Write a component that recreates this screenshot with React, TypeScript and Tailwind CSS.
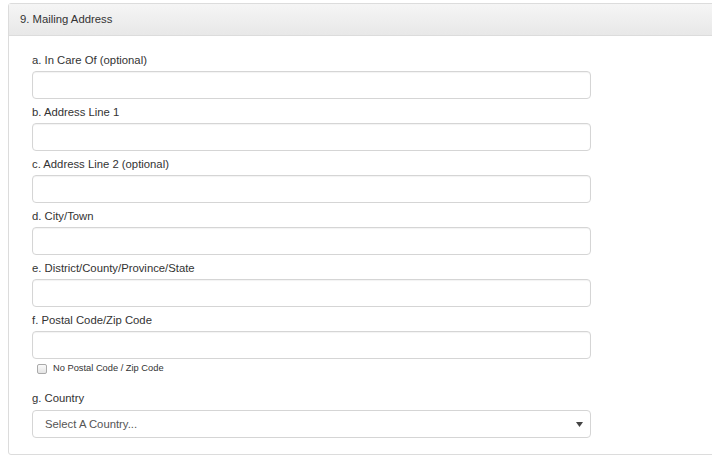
const fields = [
  "a. In Care Of (optional)",
  "b. Address Line 1",
  "c. Address Line 2 (optional)",
  "d. City/Town",
  "e. District/County/Province/State",
  "f. Postal Code/Zip Code",
];

export default function App() {
  return (
    <div className="h-[464px] w-[712px] overflow-hidden bg-white pl-[8px] pt-[3px] font-['Liberation_Sans',Arial,sans-serif] text-[11.3px] text-[#333]">
      <div className="w-[720px] rounded-[3px] border border-[#dcdcdc]">
        <div className="flex h-[32px] items-center border-b border-[#dcdcdc] bg-gradient-to-b from-[#f5f5f5] to-[#e8e8e8] pl-[11px]">
          9. Mailing Address
        </div>
        <div className="flex w-[582px] flex-col pl-[23px] pt-[15px] pb-[16px]">
          {fields.map((label, i) => (
            <div key={label} className="flex flex-col">
              <label className="mb-[2px] leading-[18px]">{label}</label>
              <input
                type="text"
                className={`h-[28px] w-[559px] rounded-[4px] border border-[#d5d5d5] bg-white px-3 shadow-[inset_0_1px_1px_rgba(0,0,0,0.05)] outline-none ${i < fields.length - 1 ? "mb-[4px]" : ""}`}
              />
            </div>
          ))}
          <label className="mt-[3px] flex h-[14px] items-center gap-[6px] pl-[5px] text-[9.3px]">
            <span className="h-[10px] w-[10px] rounded-[2px] border border-[#aaa] bg-gradient-to-b from-[#fafafa] to-[#e4e4e4]" />
            No Postal Code / Zip Code
          </label>
          <label className="mt-[13px] mb-[3px] leading-[18px]">g. Country</label>
          <div className="flex h-[28px] w-[559px] items-center justify-between rounded-[4px] border border-[#d5d5d5] bg-white pl-[12px] pr-[7px] text-[#555]">
            <span>Select A Country...</span>
            <svg width="7" height="5" viewBox="0 0 7 5">
              <path d="M0 0h7L3.5 5z" fill="#444" />
            </svg>
          </div>
        </div>
      </div>
    </div>
  );
}
